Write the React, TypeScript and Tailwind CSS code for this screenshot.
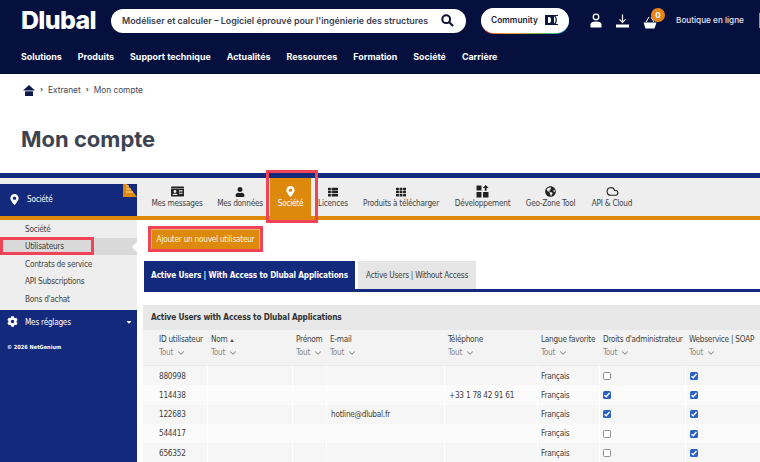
import { FaCaretDown, FaCog, FaGlobeAmericas, FaIdCard, FaMapMarkerAlt, FaThList, FaTh, FaUser } from "react-icons/fa"
import { LuChevronDown, LuCloud } from "react-icons/lu"

const mainNav = ["Solutions", "Produits", "Support technique", "Actualités", "Ressources", "Formation", "Société", "Carrière"]

const sideLinks = ["Société", "Utilisateurs", "Contrats de service", "API Subscriptions", "Bons d'achat"]

const columns = [
	{ title: "ID utilisateur" },
	{ title: "Nom", sorted: true },
	{ title: "Prénom" },
	{ title: "E-mail" },
	{ title: "Téléphone" },
	{ title: "Langue favorite" },
	{ title: "Droits d'administrateur" },
	{ title: "Webservice | SOAP" },
]

const rows = [
	{ id: "880998", email: "", phone: "", admin: false },
	{ id: "114438", email: "", phone: "+33 1 78 42 91 61", admin: true },
	{ id: "122683", email: "hotline@dlubal.fr", phone: "", admin: true },
	{ id: "544417", email: "", phone: "", admin: false },
	{ id: "656352", email: "", phone: "", admin: false },
]

const gridCols = "grid grid-cols-[64px_85px_34px_118px_93px_62px_86px_80px]"

function DevIcon() {
	return (
		<svg width="13" height="13" viewBox="0 0 13 13" fill="#222">
			<rect x="0.5" y="0.5" width="5" height="5" />
			<rect x="0.5" y="7" width="5" height="5.5" />
			<rect x="7" y="7" width="5.5" height="5.5" />
			<path d="M9.7 0 L12.6 3 H10.6 V5.8 H8.8 V3 H6.8 Z" />
		</svg>
	)
}

function Checkbox({ checked }: { checked: boolean }) {
	if (!checked) return <span className="block h-[8px] w-[8px] rounded-[1.5px] border border-[#8f8f8f] bg-white" />
	return (
		<span className="flex h-[8px] w-[8px] items-center justify-center rounded-[1.5px] bg-[#2a62c4]">
			<svg width="8" height="8" viewBox="0 0 8 8" fill="none" stroke="#fff" strokeWidth="1.4">
				<path d="M1.5 4.2 L3.2 5.8 L6.5 2" />
			</svg>
		</span>
	)
}

function Header() {
	return (
		<header className="h-[74px] bg-[#05103f] pl-[21px] font-['Inter',sans-serif] tracking-normal text-white">
			<div className="flex h-[40px] items-center pt-[1px]">
				<span className="w-[90px] shrink-0 text-[25px] leading-none font-extrabold tracking-[-0.7px]">Dlubal</span>
				<div className="flex h-[24px] w-[355px] shrink-0 items-center justify-between rounded-full bg-white pr-[12px] pl-[11px] text-[8.9px] font-semibold whitespace-nowrap text-[#3a4150]">
					<span>Modéliser et calculer – Logiciel éprouvé pour l'ingénierie des structures</span>
					<svg width="13" height="13" viewBox="0 0 14 14" fill="none" stroke="#0a1230" strokeWidth="2.2">
						<circle cx="5.6" cy="5.6" r="4.2" />
						<path d="M8.8 8.8 L13 13" />
					</svg>
				</div>
				<div className="mt-[1px] ml-[15px] h-[26px] w-[88px] shrink-0 rounded-full bg-[linear-gradient(90deg,#e8483a,#f0a020,#6fb93f,#2e9bd6)]">
					<div className="flex h-[24.5px] items-center justify-center gap-[7px] rounded-full bg-white text-[8.4px] font-semibold text-[#1c2440]">
						Community
						<svg width="14" height="12" viewBox="0 0 14 12">
							<rect x="0" y="1" width="9" height="10" fill="#10183a" />
							<path d="M3 3 H4.5 C6.5 3 6.5 9 4.5 9 H3 Z" fill="#fff" />
							<path d="M9 1.5 H13 M9 10.5 H13 M9 1.5 C12 3 12 9 9 10.5" fill="none" stroke="#10183a" strokeWidth="1.2" />
						</svg>
					</div>
				</div>
				<svg className="ml-[20px] shrink-0" width="14" height="15" viewBox="0 0 14 15" fill="#fff">
					<path fillRule="evenodd" d="M7 0.5 A3.4 3.4 0 1 1 7 7.3 A3.4 3.4 0 1 1 7 0.5 Z M7 1.8 A2.1 2.1 0 1 0 7 6 A2.1 2.1 0 1 0 7 1.8 Z" />
					<path d="M1.5 14.5 V11.5 C1.5 9.5 3.5 8.5 7 8.5 C10.5 8.5 12.5 9.5 12.5 11.5 V14.5 Z" />
				</svg>
				<svg className="ml-[13px] shrink-0" width="13" height="14" viewBox="0 0 13 14" fill="none" stroke="#fff" strokeWidth="1.2">
					<path d="M6.5 0.5 V8 M3.5 5.3 L6.5 8.3 L9.5 5.3" />
					<rect x="0" y="10.5" width="13" height="3" fill="#fff" stroke="none" />
				</svg>
				<div className="relative ml-[14px] h-[16px] w-[14px] shrink-0">
					<svg width="14" height="14" viewBox="0 0 14 14" className="mt-[3px]" fill="#fff">
						<path d="M0.5 6.5 H13.5 L11.5 12.5 H2.5 Z" />
						<path d="M3 6 L6 1 M8 1 L11 6" stroke="#fff" fill="none" />
					</svg>
					<span className="absolute -top-[5px] left-[8px] flex h-[14px] w-[14px] items-center justify-center rounded-full bg-[#e8861a] text-[8px] font-bold">0</span>
				</div>
				<span className="ml-[19px] shrink-0 text-[8.2px] font-medium whitespace-nowrap text-[#e4e7f0]">Boutique en ligne</span>
				<span className="ml-[15px] h-[15px] w-[1px] shrink-0 bg-[#8d93aa]" />
			</div>
			<nav className="flex h-[34px] items-center gap-[16px] pb-[1px] text-[8.9px] font-bold">
				{mainNav.map((item) => (
					<a key={item}>{item}</a>
				))}
			</nav>
		</header>
	)
}

function Sidebar() {
	return (
		<aside className="flex w-[137px] shrink-0 flex-col bg-[#eeeeee]">
			<div className="relative mt-[6px] flex h-[32px] items-center bg-[#13297c] pb-[2px] pl-[9px] text-white">
				<FaMapMarkerAlt size={11} />
				<span className="ml-[7px]">Société</span>
				<svg className="absolute top-0 right-0" width="14" height="14" viewBox="0 0 14 14">
					<path d="M0 0 H4 L14 13 H0 Z" fill="#dd8a0c" />
					<path d="M3 2 H6 M3 5 H8 M3 8 H10" stroke="#f5d9a0" strokeWidth="1" />
				</svg>
			</div>
			<div className="h-[4px] bg-[#dd8a0c]" />
			<ul className="pb-[2px] text-[#3f3f3f]">
				{sideLinks.map((link) => (
					<li key={link} className={`relative flex h-[17.6px] items-center pl-[25px] ${link === "Utilisateurs" ? "bg-[#d9d9d9]" : ""}`}>
						{link}
						{link === "Utilisateurs" && <span className="absolute top-[4px] right-0 border-y-[5px] border-r-[5px] border-y-transparent border-r-white" />}
					</li>
				))}
			</ul>
			<div className="flex-1 bg-[#13297c] text-white">
				<div className="flex h-[24px] items-center pr-[4px] pl-[7px]">
					<FaCog size={11} />
					<span className="ml-[7px] flex-1">Mes réglages</span>
					<FaCaretDown size={8} />
				</div>
				<p className="mt-[9px] pl-[7px] text-[5.6px] font-bold tracking-normal">© 2026 NetGenium</p>
			</div>
		</aside>
	)
}

function TabBar() {
	const tabs = [
		{ label: "Mes messages", icon: <FaIdCard size={13} />, width: "w-[66px]" },
		{ label: "Mes données", icon: <FaUser size={10} />, width: "w-[60px]" },
		{ label: "Société", icon: <FaMapMarkerAlt size={11} />, width: "w-[41px]", active: true },
		{ label: "Licences", icon: <FaThList size={10} />, width: "w-[44px]" },
		{ label: "Produits à télécharger", icon: <FaTh size={10} />, width: "w-[92px]" },
		{ label: "Développement", icon: <DevIcon />, width: "w-[71px]" },
		{ label: "Geo-Zone Tool", icon: <FaGlobeAmericas size={11} />, width: "w-[65px]" },
		{ label: "API & Cloud", icon: <LuCloud size={13} />, width: "w-[58px]" },
	]
	return (
		<div className="flex h-[38px] items-stretch bg-[#eeeeee] pl-[7px]">
			{tabs.map((tab) => (
				<a
					key={tab.label}
					className={`flex shrink-0 flex-col items-center justify-start whitespace-nowrap ${tab.width} ${tab.active ? "bg-[#dd8a0c] text-white" : "text-[#3f3f3f]"}`}
				>
					<span className={`mt-[7px] flex h-[13px] items-center ${tab.active ? "text-white" : "text-[#222]"}`}>{tab.icon}</span>
					<span className="leading-[11px]">{tab.label}</span>
				</a>
			))}
		</div>
	)
}

function UsersTable() {
	return (
		<section className="mt-[13px] ml-[-1px] text-[#3f3f3f]">
			<div className="flex h-[25px] items-center bg-[#e8e8e8] pl-[8px] font-bold tracking-[-0.15px] text-[#333]">Active Users with Access to Dlubal Applications</div>
			<div className={`${gridCols} h-[36px] border-b border-[#ebebeb] bg-[#f3f3f3]`}>
				{columns.map((col, i) => (
					<div key={col.title} className={`whitespace-nowrap pt-[4px] ${i === 0 ? "pl-[16px]" : "pl-[4px]"}`}>
						<div className="flex items-center gap-[3px] leading-[11px]">
							{col.title}
							{col.sorted && <span className="mt-[1px] border-x-[2.5px] border-b-[3px] border-x-transparent border-b-[#555]" />}
						</div>
						<div className="mt-[2px] flex items-center gap-[3px] leading-[11px] text-[#8a8a8a]">
							Tout
							<LuChevronDown size={10} strokeWidth={2.5} />
						</div>
					</div>
				))}
			</div>
			{rows.map((row, i) => (
				<div key={row.id} className={`${gridCols} h-[19.3px] items-stretch ${i % 2 === 0 ? "bg-[#f6f6f6]" : "bg-[#fbfbfb]"}`}>
					<div className="flex items-center pl-[16px]">{row.id}</div>
					<div className="border-l border-white" />
					<div className="border-l border-white" />
					<div className="flex items-center border-l border-white pl-[4px]">{row.email}</div>
					<div className="flex items-center border-l border-white pl-[4px]">{row.phone}</div>
					<div className="flex items-center border-l border-white pl-[3px]">Français</div>
					<div className="flex items-center border-l border-white pl-[3px]">
						<Checkbox checked={row.admin} />
					</div>
					<div className="flex items-center border-l border-white pl-[4px]">
						<Checkbox checked />
					</div>
				</div>
			))}
		</section>
	)
}

export default function App() {
	return (
		<div className="h-[462px] w-[760px] overflow-hidden bg-white font-['DejaVu_Sans_Condensed','Liberation_Sans',sans-serif] text-[8.2px] tracking-[-0.25px]">
			<Header />
			<div className="flex h-[32px] items-center gap-[4px] pl-[23px] font-['Inter',sans-serif] text-[8.3px] tracking-normal text-[#3d4557]">
				<svg width="12" height="11" viewBox="0 0 12 11" fill="#0b1a4a">
					<path d="M6 0 L12 5.5 H0 Z" />
					<path d="M2 6.3 H10 V11 H2 Z" />
				</svg>
				<span className="ml-[1px] text-[7px] font-bold">›</span>
				<span className="ml-[1px]">Extranet</span>
				<span className="ml-[1px] text-[7px] font-bold">›</span>
				<span className="ml-[1px]">Mon compte</span>
			</div>
			<h1 className="mt-[17px] pl-[21px] font-['Inter',sans-serif] text-[22px] leading-[32px] font-bold tracking-normal text-[#3d4451]">Mon compte</h1>
			<div className="mt-[18px] h-[5px] bg-[#13297c]" />
			<div className="relative flex">
				<Sidebar />
				<main className="min-w-0 flex-1">
					<TabBar />
					<div className="h-[4px] bg-[#dd8a0c]" />
					<div className="pt-[9px] pl-[7px]">
						<button className="ml-[7px] h-[21px] w-[109px] border border-[#f0b860] bg-[#dd8a0c] whitespace-nowrap text-[#fdf3df]">Ajouter un nouvel utilisateur</button>
						<div className="mt-[11px] flex items-start gap-[3px] border-b-[3px] border-[#13297c]">
							<div className="flex h-[28px] w-[211px] items-center justify-center bg-[#13297c] font-bold tracking-[-0.15px] whitespace-nowrap text-white">Active Users | With Access to Dlubal Applications</div>
							<div className="flex h-[28px] w-[118px] items-center justify-center bg-[#e6e6e6] whitespace-nowrap text-[#3f3f3f]">Active Users | Without Access</div>
						</div>
						<UsersTable />
					</div>
				</main>
				<span className="absolute top-[-8px] left-[266px] h-[53px] w-[52px] border-[3px] border-[#ee4455]" />
				<span className="absolute top-[48px] left-[148px] h-[26px] w-[115px] border-[3px] border-[#ee4455]" />
				<span className="absolute top-[59px] left-0 h-[18px] w-[94px] border-[3px] border-[#ee4455]" />
			</div>
		</div>
	)
}
